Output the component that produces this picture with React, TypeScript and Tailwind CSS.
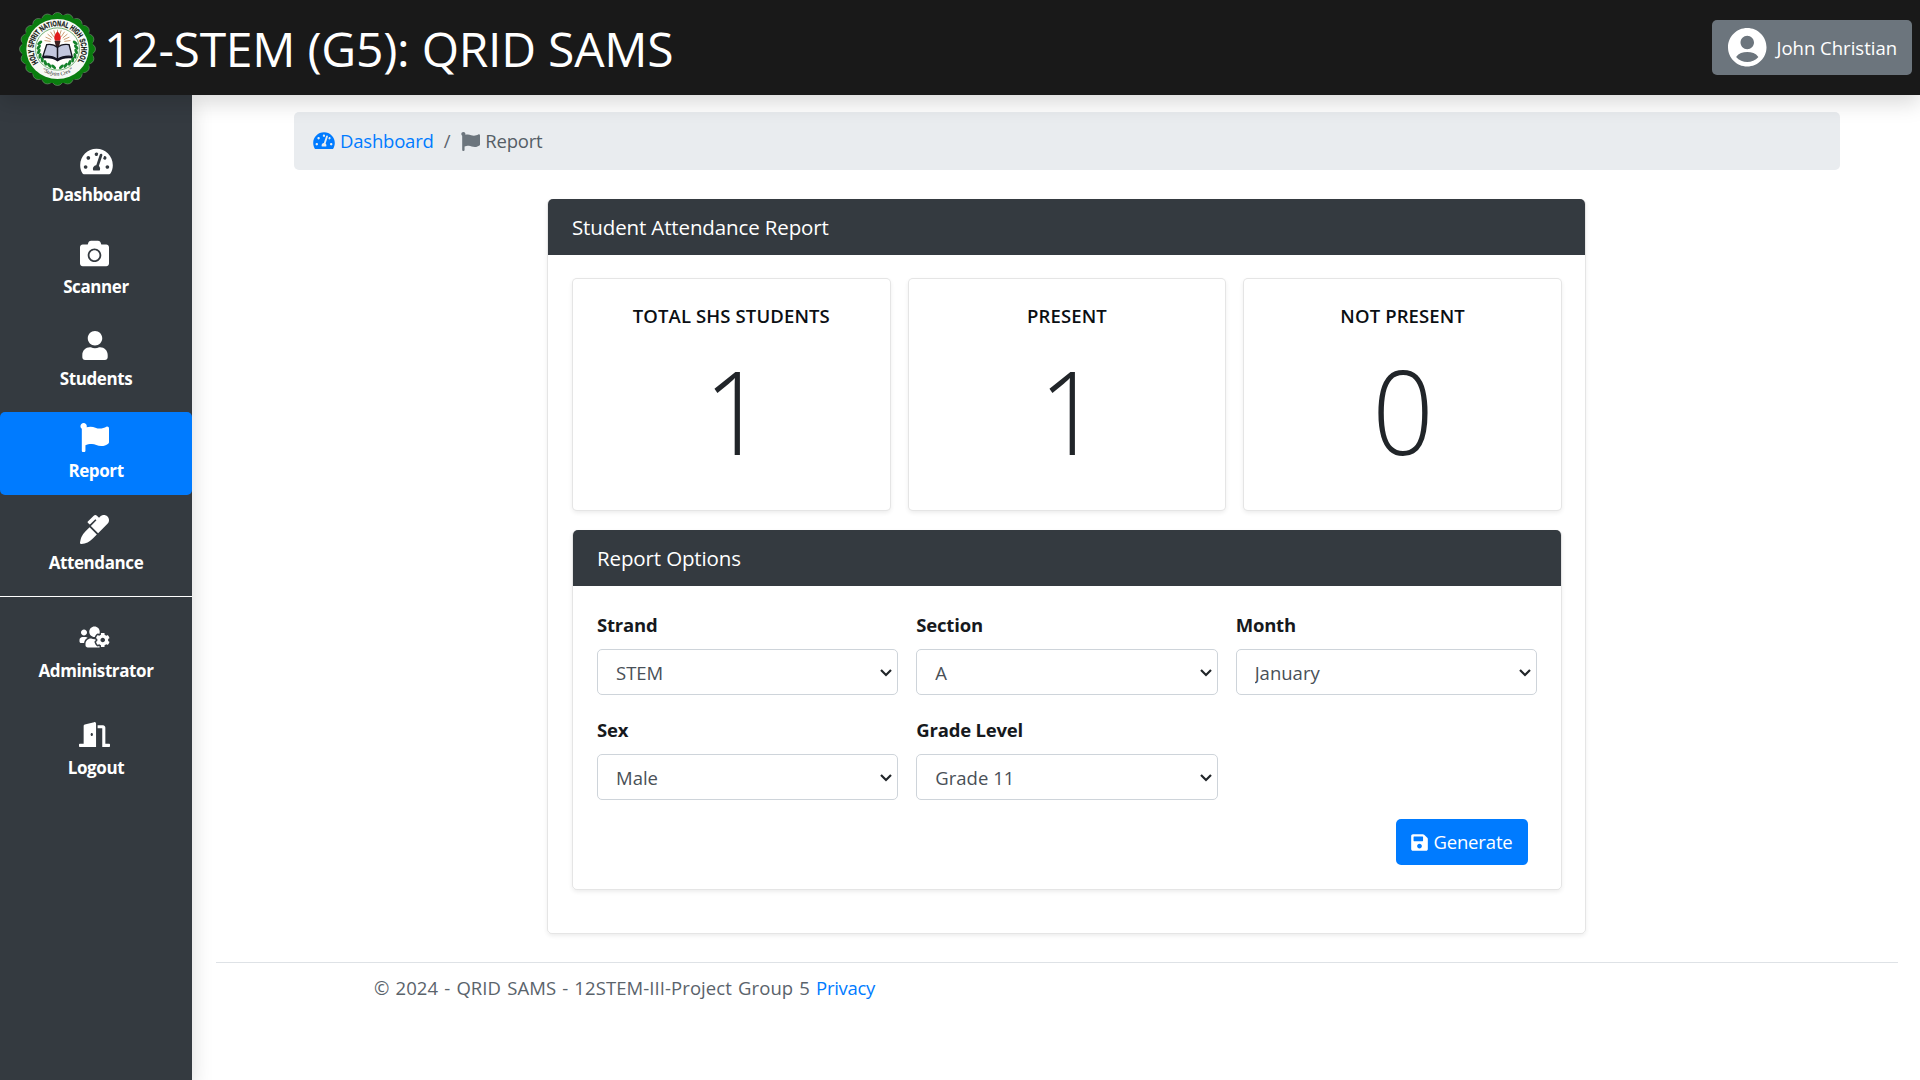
import React from "react";
import {
  FaTachometerAlt,
  FaCamera,
  FaUser,
  FaFlag,
  FaMarker,
  FaUsersCog,
  FaDoorOpen,
  FaSave,
} from "react-icons/fa";

const scallops = Array.from({ length: 20 }, (_, i) => {
  const a = (i / 20) * Math.PI * 2;
  return { x: 50 + 42.3 * Math.cos(a), y: 50 + 42.3 * Math.sin(a) };
});

const rays = Array.from({ length: 11 }, (_, i) => {
  const a = Math.PI + ((i + 0.5) / 11) * Math.PI;
  return {
    x1: 50 + 9 * Math.cos(a),
    y1: 41 + 9 * Math.sin(a),
    x2: 50 + 17 * Math.cos(a),
    y2: 41 + 17 * Math.sin(a),
  };
});

const leaves = Array.from({ length: 8 }, (_, i) => {
  const a = (-20 + i * 14) * (Math.PI / 180);
  return { x: 24.5 * Math.cos(a), y: 50 + 24.5 * Math.sin(a), r: -20 + i * 14 };
});

function Seal() {
  return (
    <svg
      viewBox="0 0 100 100"
      preserveAspectRatio="none"
      className="h-[74px] w-[77px] shrink-0"
    >
      <defs>
        <path id="ring" d="M25 68.5 A31 31 0 1 1 75 68.5" />
        <path id="motto" d="M28 78 Q50 94 72 78" />
      </defs>
      {scallops.map((s, i) => (
        <circle key={i} cx={s.x} cy={s.y} r="7" fill="#0a7d0f" stroke="#7f917f" strokeWidth="0.8" />
      ))}
      <circle cx="50" cy="50" r="46.5" fill="#0a7d0f" />
      <circle cx="50" cy="50" r="40.5" fill="#f6f8f4" />
      <circle cx="50" cy="50" r="28.5" fill="#fffefb" stroke="#4b9a4f" strokeWidth="1" />
      {[1, -1].map((side) => (
        <g key={side} transform={`translate(50 0) scale(${side} 1)`}>
          {leaves.map((l, i) => (
            <ellipse
              key={i}
              cx={l.x}
              cy={l.y}
              rx="3.9"
              ry="2"
              fill="#15822a"
              transform={`rotate(${l.r + 60} ${l.x} ${l.y})`}
            />
          ))}
        </g>
      ))}
      {rays.map((r, i) => (
        <line key={i} {...r} stroke="#c08a5a" strokeWidth="1.1" />
      ))}
      <path d="M50 26c5 6 5 9 3 13h-6c-2-4-2-7 3-13z" fill="#e01b1b" />
      <path d="M46 39h8l-1.5 6v16h-5V45z" fill="#3b2020" />
      <path d="M36 44c6-1 10 0 14 4 4-4 9-5 15-4l4 16c-7-1-13 0-19 4-5-4-11-5-19-4z" fill="#c3c7df" stroke="#15151f" strokeWidth="1.8" />
      <path d="M31 60c8-1 14 0 19 4 6-4 12-5 19-4v3c-7-1-13 0-19 4-5-4-11-5-19-4z" fill="#111122" />
      <path d="M50 48v16" stroke="#15151f" strokeWidth="2" />
      <text
        className="font-['Liberation_Sans'] text-[10.5px] font-bold"
        fill="#0d120d"
        stroke="#0d120d"
        strokeWidth="0.3"
      >
        <textPath href="#ring" textLength="134" lengthAdjust="spacingAndGlyphs">
          HOLY SPIRIT NATIONAL HIGH SCHOOL
        </textPath>
      </text>
      <text className="font-['Liberation_Serif'] text-[7.5px] italic" fill="#222" textAnchor="middle">
        <textPath href="#motto" startOffset="50%">“Sulyan Cres”</textPath>
      </text>
    </svg>
  );
}

function Avatar() {
  return (
    <svg viewBox="2 2 20 20" className="size-[38.5px] shrink-0" fill="currentColor">
      <path
        fillRule="evenodd"
        d="M12 2C6.48 2 2 6.48 2 12s4.48 10 10 10 10-4.48 10-10S17.52 2 12 2zm0 4c1.93 0 3.5 1.57 3.5 3.5S13.93 13 12 13s-3.5-1.57-3.5-3.5S10.07 6 12 6zm0 13.6c-2.1 0-4.3-.8-5.8-2.6C7.6 15.2 9.7 14.5 12 14.5s4.4.7 5.8 2.5c-1.5 1.8-3.7 2.6-5.8 2.6z"
      />
    </svg>
  );
}

const mainNav = [
  { label: "Dashboard", Icon: FaTachometerAlt, size: "h-[29px] w-[33px]", pad: "" },
  { label: "Scanner", Icon: FaCamera, size: "size-[29px]", pad: "pr-[3px]" },
  { label: "Students", Icon: FaUser, size: "h-[29px] w-[26px]", pad: "pr-[3px]" },
  { label: "Report", Icon: FaFlag, size: "size-[29px]", pad: "pr-[3px]", active: true },
  { label: "Attendance", Icon: FaMarker, size: "size-[29px]", pad: "pr-[3px]" },
];

const navLabel = "text-[17px] leading-[30px] font-bold tracking-[-0.4px]";

function Sidebar() {
  return (
    <aside className="flex w-48 shrink-0 flex-col bg-[#343a40] pt-[41px] text-white shadow-[0_8px_20px_rgba(0,0,0,0.15)]">
      <nav className="flex flex-col gap-[9px]">
        {mainNav.map(({ label, Icon, size, pad, active }) => (
          <a
            key={label}
            className={`flex h-[83px] flex-col items-center rounded-[5px] pt-[11px] ${active ? "bg-[#007bff]" : ""}`}
          >
            <span className={pad}>
              <Icon className={size} />
            </span>
            <span className={`mt-1 ${navLabel}`}>{label}</span>
          </a>
        ))}
      </nav>
      <div className="mt-[9px] h-px bg-white" />
      <nav className="flex flex-col gap-[36px] pt-[28px]">
        <a className="flex flex-col items-center">
          <FaUsersCog className="mr-[3px] h-6 w-[31px]" />
          <span className={`mt-[7px] ${navLabel}`}>Administrator</span>
        </a>
        <a className="flex flex-col items-center">
          <FaDoorOpen className="mr-[3px] h-[25px] w-[31px]" />
          <span className={`mt-[6px] ${navLabel}`}>Logout</span>
        </a>
      </nav>
    </aside>
  );
}

function StatCard({ title, value }: { title: string; value: number }) {
  return (
    <div className="flex h-[233px] flex-col items-center rounded-[5px] border border-black/10 bg-white pt-[23px] shadow-[0_2px_4px_rgba(0,0,0,0.075)]">
      <h5 className="text-[18.5px] leading-[28px] font-[550] tracking-[0.12px] text-[#0b0f13]">{title}</h5>
      <p
        className={`mt-[8px] scale-x-[0.93] text-[116px] leading-[144px] font-light text-[#212529] ${value === 1 ? "pl-[7px]" : ""}`}
      >
        {value}
      </p>
    </div>
  );
}

function Field({ label, value, options }: { label: string; value: string; options: string[] }) {
  return (
    <div>
      <label className="block text-[18.5px] leading-[29px] font-bold tracking-[-0.2px] text-[#16191d]">{label}</label>
      <div className="relative mt-[10px]">
        <select
          defaultValue={value}
          className="block h-[46px] w-full appearance-none rounded-[5px] border border-[#ced4da] bg-white pt-px pl-[18px] text-[18.5px] text-[#495057]"
        >
          {options.map((o) => (
            <option key={o}>{o}</option>
          ))}
        </select>
        <svg
          viewBox="0 0 12 8"
          className="pointer-events-none absolute top-[20px] right-[6px] h-[8px] w-[12px]"
          fill="none"
          stroke="#212529"
          strokeWidth="2.2"
        >
          <path d="M1 1l5 5 5-5" />
        </svg>
      </div>
    </div>
  );
}

const fields = [
  { label: "Strand", value: "STEM", options: ["STEM"] },
  { label: "Section", value: "A", options: ["A"] },
  { label: "Month", value: "January", options: ["January"] },
  { label: "Sex", value: "Male", options: ["Male"] },
  { label: "Grade Level", value: "Grade 11", options: ["Grade 11"] },
];

function CardHeader({ children }: { children: React.ReactNode }) {
  return (
    <header className="-mt-px flex h-[56px] items-center rounded-t-[5px] bg-[#343a40] pl-[24px] text-[20.5px] tracking-[-0.13px] text-white">
      {children}
    </header>
  );
}

export default function App() {
  return (
    <div className="flex h-[1080px] w-[1920px] flex-col overflow-hidden bg-white font-['Open_Sans',sans-serif] text-[18.5px] text-[#212529]">
      <header className="relative z-10 flex h-[95px] shrink-0 items-center justify-between bg-[#191919] pr-2 pl-[19px] text-white shadow-[0_8px_20px_rgba(0,0,0,0.15)]">
        <div className="flex items-center gap-[8px]">
          <span className="pt-[2px]">
            <Seal />
          </span>
          <h1 className="pt-[2px] text-[48px] leading-none tracking-[-0.25px]">12-STEM (G5): QRID SAMS</h1>
        </div>
        <button className="flex h-[55px] w-[200px] items-center gap-[10px] rounded-[5px] bg-[#6c757d] pl-[16px]">
          <Avatar />
          <span>John Christian</span>
        </button>
      </header>

      <div className="flex min-h-0 flex-1">
        <Sidebar />
        <main className="flex flex-1 flex-col pt-[17px]">
          <nav className="mr-[80px] ml-[102px] flex h-[58px] shrink-0 items-center rounded-[5px] bg-[#e9ecef] pl-[19px] tracking-[-0.2px]">
            <a className="flex items-center gap-[5px] text-[#007bff]">
              <FaTachometerAlt className="h-[19.2px] w-[22px]" />
              Dashboard
            </a>
            <span className="mr-[11px] ml-[10px] text-[#5c656d]">/</span>
            <span className="flex items-center gap-[5px] text-[#555e66]">
              <FaFlag className="size-[19px] text-[#6c757d]" />
              Report
            </span>
          </nav>

          <section className="mt-[29px] ml-[355px] h-[735px] w-[1039px] shrink-0 rounded-[5px] border border-black/10 shadow-[0_2px_4px_rgba(0,0,0,0.075)]">
            <CardHeader>Student Attendance Report</CardHeader>
            <div className="pt-[23px] pr-[23px] pl-[24px]">
              <div className="grid grid-cols-3 gap-[17px]">
                <StatCard title="TOTAL SHS STUDENTS" value={1} />
                <StatCard title="PRESENT" value={1} />
                <StatCard title="NOT PRESENT" value={0} />
              </div>

              <div className="mt-[19px] h-[360px] rounded-[5px] border border-black/10 shadow-[0_2px_4px_rgba(0,0,0,0.075)]">
                <CardHeader>Report Options</CardHeader>
                <div className="grid grid-cols-3 gap-x-[18px] gap-y-[20px] px-[24px] pt-[24px]">
                  {fields.map((f) => (
                    <Field key={f.label} {...f} />
                  ))}
                </div>
                <div className="mt-[19px] flex justify-end pr-[33px]">
                  <button className="flex h-[46px] w-[132px] items-center justify-center gap-[5px] rounded-[5px] bg-[#007bff] tracking-[-0.15px] text-white">
                    <FaSave className="h-[19px] w-[17px]" />
                    Generate
                  </button>
                </div>
              </div>
            </div>
          </section>

          <footer className="mt-[28px] mr-[22px] ml-[24px] border-t border-[#dee2e6] pt-[10px] pl-[158px] leading-[29px] text-[#5a636b]">
            <span className="tracking-[0.08px] [word-spacing:1.2px]">© 2024 - QRID SAMS - 12STEM-III-Project Group 5 </span>
            <a className="tracking-[-0.3px] text-[#007bff]">Privacy</a>
          </footer>
        </main>
      </div>
    </div>
  );
}
